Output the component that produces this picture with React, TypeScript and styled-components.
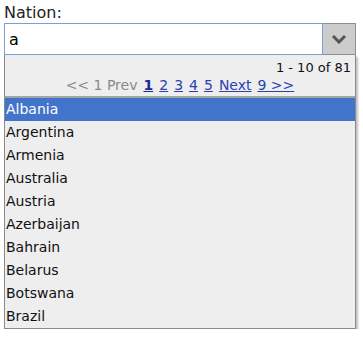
import styled, { createGlobalStyle } from 'styled-components'

const nations = [
  'Albania',
  'Argentina',
  'Armenia',
  'Australia',
  'Austria',
  'Azerbaijan',
  'Bahrain',
  'Belarus',
  'Botswana',
  'Brazil',
]

const pages = [1, 2, 3, 4, 5]

export default function App() {
  return (
    <>
      <GlobalStyle />
      <Field>
        <Label>Nation:</Label>
        <Combo>
          <Input value='a' readOnly />
          <DropButton type='button' aria-label='Open'>
            <svg width='16' height='10' viewBox='0 0 16 10'>
              <path d='M2 2 L8 8 L14 2' fill='none' stroke='#555' strokeWidth='3' />
            </svg>
          </DropButton>
        </Combo>
        <Panel>
          <Pager>
            <Count>1 - 10 of 81</Count>
            <PageLinks>
              <Muted>&lt;&lt; 1 Prev</Muted>
              {pages.map((p) => (
                <PageLink key={p} href='#' $current={p === 1}>
                  {p}
                </PageLink>
              ))}
              <PageLink href='#'>Next</PageLink>
              <PageLink href='#'>9 &gt;&gt;</PageLink>
            </PageLinks>
          </Pager>
          <List>
            {nations.map((n, i) => (
              <Item key={n} $selected={i === 0}>
                {n}
              </Item>
            ))}
          </List>
        </Panel>
      </Field>
    </>
  )
}

const GlobalStyle = createGlobalStyle`
  body {
    margin: 0;
    background: #fff;
    font-family: "DejaVu Sans", Verdana, sans-serif;
  }
`

const Field = styled.div`
  padding: 3px 4px 0;
  width: 352px;
`

const Label = styled.div`
  font-size: 16px;
  line-height: 20px;
  color: #222;
`

const Combo = styled.div`
  display: flex;
  height: 32px;
`

const Input = styled.input`
  flex: 1;
  min-width: 0;
  box-sizing: border-box;
  height: 32px;
  border: 1px solid #7b9fd6;
  padding: 0 4px;
  font-family: "DejaVu Sans", Verdana, sans-serif;
  font-size: 16px;
  color: #000;
  outline: none;
`

const DropButton = styled.button`
  width: 33px;
  height: 32px;
  box-sizing: border-box;
  border: 1px solid #8f8f8f;
  border-left: none;
  background: #cccccc;
  display: flex;
  align-items: center;
  justify-content: center;
  padding: 0;
`

const Panel = styled.div`
  box-sizing: border-box;
  width: 352px;
  border: 1px solid #8a8a8a;
  border-top: none;
  background: #eeeeee;
  box-shadow: 2px 2px 2px rgba(0, 0, 0, 0.25);
`

const Pager = styled.div`
  padding: 4px 4px 2px;
  border-bottom: 2px solid #a5a5a5;
`

const Count = styled.div`
  text-align: right;
  color: #111;
  font-size: 13px;
  line-height: 17px;
`

const PageLinks = styled.div`
  display: flex;
  justify-content: center;
  gap: 6px;
  font-size: 14px;
  line-height: 18px;
`

const Muted = styled.span`
  color: #8a8a8a;
`

const PageLink = styled.a<{ $current?: boolean }>`
  text-decoration: underline;
  font-weight: ${(p) => (p.$current ? 700 : 400)};
  color: ${(p) => (p.$current ? '#1a2a90' : '#2a3fb0')};
`

const List = styled.ul`
  list-style: none;
  margin: 0;
  padding: 0;
`

const Item = styled.li<{ $selected?: boolean }>`
  height: 23px;
  line-height: 23px;
  padding-left: 1px;
  font-size: 14px;
  color: ${(p) => (p.$selected ? '#fff' : '#111')};
  background: ${(p) => (p.$selected ? '#4374cc' : 'transparent')};
`
